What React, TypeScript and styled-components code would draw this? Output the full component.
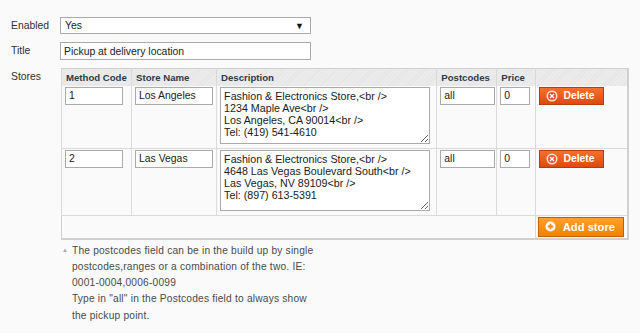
import React from "react";
import styled, { createGlobalStyle } from "styled-components";

const GlobalStyle = createGlobalStyle`
  body {
    margin: 0;
    background: #fafafa;
    font-family: "Liberation Sans", Arial, sans-serif;
    color: #2f2f2f;
  }
`;

const stores = [
  {
    code: "1",
    name: "Los Angeles",
    description:
      "Fashion & Electronics Store,<br />\n1234 Maple Ave<br />\nLos Angeles, CA 90014<br />\nTel: (419) 541-4610",
    postcodes: "all",
    price: "0",
    areaHeight: 57,
  },
  {
    code: "2",
    name: "Las Vegas",
    description:
      "Fashion & Electronics Store,<br />\n4648 Las Vegas Boulevard South<br />\nLas Vegas, NV 89109<br />\nTel: (897) 613-5391",
    postcodes: "all",
    price: "0",
    areaHeight: 61,
  },
];

function DeleteIcon() {
  return (
    <svg width="12" height="12" viewBox="0 0 12 12">
      <circle cx="6" cy="6" r="5.5" fill="#fde3d3" />
      <circle cx="6" cy="6" r="4" fill="#e9552a" />
      <path d="M4 4 L8 8 M8 4 L4 8" stroke="#fff" strokeWidth="1.6" />
    </svg>
  );
}

function AddIcon() {
  return (
    <svg width="11" height="11" viewBox="0 0 12 12">
      <circle cx="6" cy="6" r="5.5" fill="#fff" />
      <path d="M6 3 V9 M3 6 H9" stroke="#f08a16" strokeWidth="2" />
    </svg>
  );
}

export default function App() {
  return (
    <Page>
      <GlobalStyle />
      <FormRow>
        <Label>Enabled</Label>
        <Select>
          <span>Yes</span>
          <Arrow>▼</Arrow>
        </Select>
      </FormRow>
      <FormRow>
        <Label>Title</Label>
        <TextInput width={251} defaultValue="Pickup at delivery location" />
      </FormRow>
      <FormRow>
        <Label>Stores</Label>
        <Field>
          <Grid>
            <thead>
              <tr>
                <Th width={70}>Method Code</Th>
                <Th width={85}>Store Name</Th>
                <Th width={220}>Description</Th>
                <Th width={60}>Postcodes</Th>
                <Th width={39}>Price</Th>
                <Th width={92}></Th>
              </tr>
            </thead>
            <tbody>
              {stores.map((s) => (
                <tr key={s.code}>
                  <Td>
                    <TextInput width={58} defaultValue={s.code} />
                  </Td>
                  <Td>
                    <TextInput width={78} defaultValue={s.name} />
                  </Td>
                  <Td>
                    <Area areaHeight={s.areaHeight} defaultValue={s.description} />
                  </Td>
                  <Td>
                    <TextInput width={55} defaultValue={s.postcodes} />
                  </Td>
                  <Td>
                    <TextInput width={30} defaultValue={s.price} />
                  </Td>
                  <Td>
                    <Button variant="delete">
                      <DeleteIcon />
                      Delete
                    </Button>
                  </Td>
                </tr>
              ))}
              <tr>
                <FootCell colSpan={5}></FootCell>
                <FootCell>
                  <Button variant="add">
                    <AddIcon />
                    Add store
                  </Button>
                </FootCell>
              </tr>
            </tbody>
          </Grid>
          <Note>
            <NoteMark>▲</NoteMark>
            <NoteText>
              The postcodes field can be in the build up by single
              <br />
              postcodes,ranges or a combination of the two. IE:
              <br />
              0001-0004,0006-0099
              <br />
              Type in "all" in the Postcodes field to always show
              <br />
              the pickup point.
            </NoteText>
          </Note>
        </Field>
      </FormRow>
    </Page>
  );
}

const Page = styled.div`
  padding: 17px 0 0 11px;
  display: flex;
  flex-direction: column;
  gap: 8px;
  font-size: 10.4px;
`;

const FormRow = styled.div`
  display: flex;
  align-items: flex-start;
`;

const Label = styled.div`
  width: 49px;
  padding-top: 3px;
  font-size: 10.4px;
  color: #303030;
`;

const Field = styled.div`
  display: flex;
  flex-direction: column;
  margin-left: 1px;
`;

const Select = styled.div`
  box-sizing: border-box;
  width: 251px;
  height: 17px;
  border: 1px solid #aaa;
  background: #fff;
  display: flex;
  align-items: center;
  justify-content: space-between;
  padding: 0 6px 0 4px;
  font-size: 10.4px;
  color: #222;
`;

const Arrow = styled.span`
  font-size: 9px;
  color: #111;
`;

const TextInput = styled.input<{ width: number }>`
  box-sizing: border-box;
  width: ${(p) => p.width}px;
  height: 18px;
  margin: 0;
  padding: 0 3px;
  border: 1px solid #aaa;
  background: #fff;
  font-family: "Liberation Sans", Arial, sans-serif;
  font-size: 10.4px;
  color: #1a1a1a;
  outline: none;
`;

const Grid = styled.table`
  border-collapse: collapse;
  border: 1px solid #d0d0d0;
  border-right-width: 2px;
  border-bottom-width: 2px;
  table-layout: fixed;
  width: 568px;
  background: #fafafa;
`;

const Th = styled.th<{ width: number }>`
  width: ${(p) => p.width}px;
  height: 17px;
  box-sizing: border-box;
  padding: 1px 4px 0;
  text-align: left;
  font-size: 9.6px;
  font-weight: bold;
  color: #2d3a4a;
  border-left: 1px solid #d9d9d9;
  background: repeating-linear-gradient(
    135deg,
    #e4e4e4 0px,
    #e4e4e4 1px,
    #ececec 1px,
    #ececec 3px
  );
`;

const Td = styled.td`
  vertical-align: top;
  padding: 1px 3px 4px;
  border: 1px solid #dadada;
  border-top: none;
  box-sizing: border-box;
`;

const FootCell = styled.td`
  padding: 1px 3px 1px 2px;
  height: 22px;
  box-sizing: border-box;
  text-align: right;
  border-left: 1px solid #dadada;
  &:first-child {
    border-left: none;
  }
`;

const Area = styled.textarea<{ areaHeight: number }>`
  box-sizing: border-box;
  display: block;
  width: 210px;
  height: ${(p) => p.areaHeight}px;
  margin: 0;
  padding: 2px 3px;
  border: 1px solid #aaa;
  background: #fff;
  resize: both;
  font-family: "Liberation Sans", Arial, sans-serif;
  font-size: 10.7px;
  line-height: 12px;
  color: #1a1a1a;
  overflow: hidden;
  outline: none;
`;

const Button = styled.button<{ variant: "delete" | "add" }>`
  display: inline-flex;
  align-items: center;
  white-space: nowrap;
  gap: ${(p) => (p.variant === "add" ? 7 : 5)}px;
  height: ${(p) => (p.variant === "add" ? 20 : 18)}px;
  margin: 0;
  padding: 0 8px 0 6px;
  border: 1px solid ${(p) => (p.variant === "add" ? "#bf5f00" : "#b83c0a")};
  background: ${(p) =>
    p.variant === "add"
      ? "linear-gradient(#ffa032, #f18200)"
      : "linear-gradient(#f7702e, #dd4a0d)"};
  color: #fff;
  font-family: "Liberation Sans", Arial, sans-serif;
  font-size: ${(p) => (p.variant === "add" ? 11.2 : 10.4)}px;
  font-weight: bold;
  cursor: pointer;
  float: ${(p) => (p.variant === "add" ? "right" : "left")};
`;

const Note = styled.div`
  display: flex;
  gap: 4px;
  padding: 3px 0 0 1px;
`;

const NoteMark = styled.span`
  font-size: 6px;
  color: #a8a8a8;
  padding-top: 4px;
`;

const NoteText = styled.div`
  font-size: 10.2px;
  line-height: 16.3px;
  color: #4a4a4a;
  letter-spacing: 0.2px;
`;
